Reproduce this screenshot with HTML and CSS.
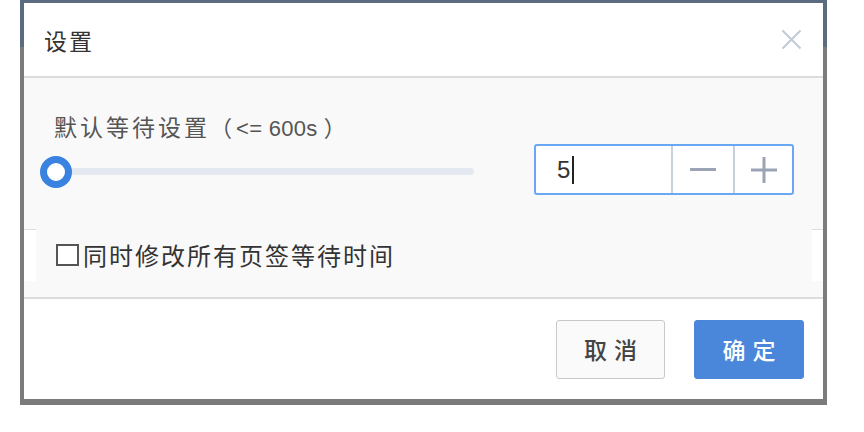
FILE: index.html
```html
<!DOCTYPE html>
<html lang="zh">
<head>
<meta charset="utf-8">
<title>设置</title>
<link rel="stylesheet" href="styles.css">
</head>
<body>
<div class="frame">
  <div class="dialog">
    <div class="hd">
      <span class="title">设置</span>
      <svg class="close" width="21" height="21" viewBox="0 0 21 21"><path d="M1.5 1.5 L19.5 19.5 M19.5 1.5 L1.5 19.5" stroke="#c3cad6" stroke-width="2" fill="none"/></svg>
    </div>
    <div class="bd">
      <div class="label"><span class="cjk">默认等待设置</span><span class="paren">（</span><span class="lat">&lt;= 600s</span><span class="paren r">）</span></div>
      <div class="ctrl-row">
        <div class="slider"><div class="track"></div><div class="knob"></div></div>
        <div class="num">
          <div class="field"><span class="val">5</span><span class="caret"></span></div>
          <div class="step minus"><span class="bar"></span></div>
          <div class="step plus"><span class="bar"></span><span class="bar vert"></span></div>
        </div>
      </div>
      <div class="chk-row">
        <div class="chk-inner"><span class="box"></span><span class="chk-text">同时修改所有页签等待时间</span></div>
      </div>
    </div>
    <div class="ft">
      <button class="btn">取消</button>
      <button class="btn primary">确定</button>
    </div>
  </div>
</div>
</body>
</html>
```
FILE: styles.css
```css
* { box-sizing: border-box; }
html, body { margin: 0; padding: 0; background: #fff; }
body {
  font-family: "Liberation Sans", "Noto Sans CJK SC", sans-serif;
  color: #333;
}
.frame {
  margin-left: 20px;
  width: 807px;
  padding: 3px 4px 6px 4px;
  background: linear-gradient(to bottom, #5b6b80 0, #5b6b80 47px, #7b7b7b 47px, #7b7b7b 100%);
}
.dialog {
  width: 799px;
  height: 396px;
  background: #fff;
  display: flex;
  flex-direction: column;
}
.hd {
  height: 75px;
  border-bottom: 2px solid #dcdcdc;
  display: flex;
  align-items: center;
  justify-content: space-between;
  padding: 0 21px 0 20px;
  flex: none;
}
.title {
  font-family: "Noto Sans CJK SC", sans-serif;
  font-size: 23px;
  letter-spacing: 2px;
  color: #333;
  line-height: 26px;
}
.close { display: block; }
.bd {
  background: #f9f9f9;
  height: 221px;
  border-bottom: 2px solid #dcdcdc;
  padding-top: 35px;
  flex: none;
}
.label {
  margin-left: 30px;
  line-height: 26px;
  color: #555;
  display: flex;
  align-items: baseline;
  white-space: pre;
}
.label .cjk {
  font-family: "Noto Sans CJK SC", sans-serif;
  font-size: 23px;
  letter-spacing: 3px;
}
.label .paren {
  font-family: "Noto Sans CJK SC", sans-serif;
  font-size: 22px;
  margin-right: 4px;
}
.label .paren.r {
  margin-right: 0;
  margin-left: 6px;
}
.label .lat {
  font-family: "Liberation Sans", sans-serif;
  font-size: 22px;
  letter-spacing: 0.3px;
}
.ctrl-row {
  margin-top: 2px;
  padding-left: 16px;
  display: flex;
  align-items: center;
  height: 51px;
}
.slider {
  position: relative;
  width: 434px;
  height: 32px;
  margin-top: 4px;
  display: flex;
  align-items: center;
}
.track {
  margin-left: 16px;
  flex: 1;
  height: 7px;
  border-radius: 4px;
  background: #e3e8f1;
}
.knob {
  position: absolute;
  left: 0;
  top: 0;
  width: 32px;
  height: 32px;
  border-radius: 50%;
  border: 7px solid #3a82e0;
  background: #fff;
}
.num {
  margin-left: 60px;
  width: 260px;
  height: 51px;
  border: 2px solid #6aa8f5;
  border-radius: 3px;
  background: #fff;
  display: flex;
}
.field {
  width: 135px;
  display: flex;
  align-items: center;
  padding-left: 21px;
  font-size: 24px;
  color: #333;
}
.caret {
  display: inline-block;
  width: 2px;
  height: 28px;
  background: #222;
  margin-left: 2px;
}
.step {
  border-left: 2px solid #c8d0de;
  display: flex;
  align-items: center;
  justify-content: center;
  position: relative;
}
.minus { width: 62px; }
.plus { width: 59px; }
.bar {
  display: block;
  width: 26px;
  height: 3px;
  background: #9ba4b4;
}
.plus .bar {
  position: absolute;
  left: 50%;
  top: 50%;
  transform: translate(-50%, -50%);
}
.plus .bar.vert {
  width: 3px;
  height: 26px;
}
.chk-row {
  margin-top: 34px;
  height: 52px;
  border-top: 1px solid #dedede;
  background: #fff;
  padding: 0 11px 0 12px;
}
.chk-inner {
  margin-top: -1px;
  height: 52px;
  background: #f9f9f9;
  display: flex;
  align-items: center;
  padding-left: 20px;
}
.box {
  width: 23px;
  height: 22px;
  border: 2px solid #555;
  margin-right: 4px;
  background: #fff;
  flex: none;
}
.chk-text {
  font-family: "Noto Sans CJK SC", sans-serif;
  font-size: 24px;
  letter-spacing: 2px;
  color: #333;
  line-height: 28px;
}
.ft {
  flex: 1;
  display: flex;
  align-items: center;
  justify-content: flex-end;
  padding-right: 19px;
  gap: 29px;
}
.btn {
  height: 59px;
  border-radius: 3px;
  font-family: "Noto Sans CJK SC", sans-serif;
  font-size: 23px;
  font-weight: 500;
  letter-spacing: 7px;
  padding: 0 0 0 7px;
  cursor: pointer;
}
.btn:not(.primary) {
  width: 109px;
  border: 1px solid #c9c9c9;
  background: #fafafa;
  color: #444;
}
.btn.primary {
  width: 110px;
  border: 1px solid #4a87da;
  background: #4a87da;
  color: #fff;
}
```
